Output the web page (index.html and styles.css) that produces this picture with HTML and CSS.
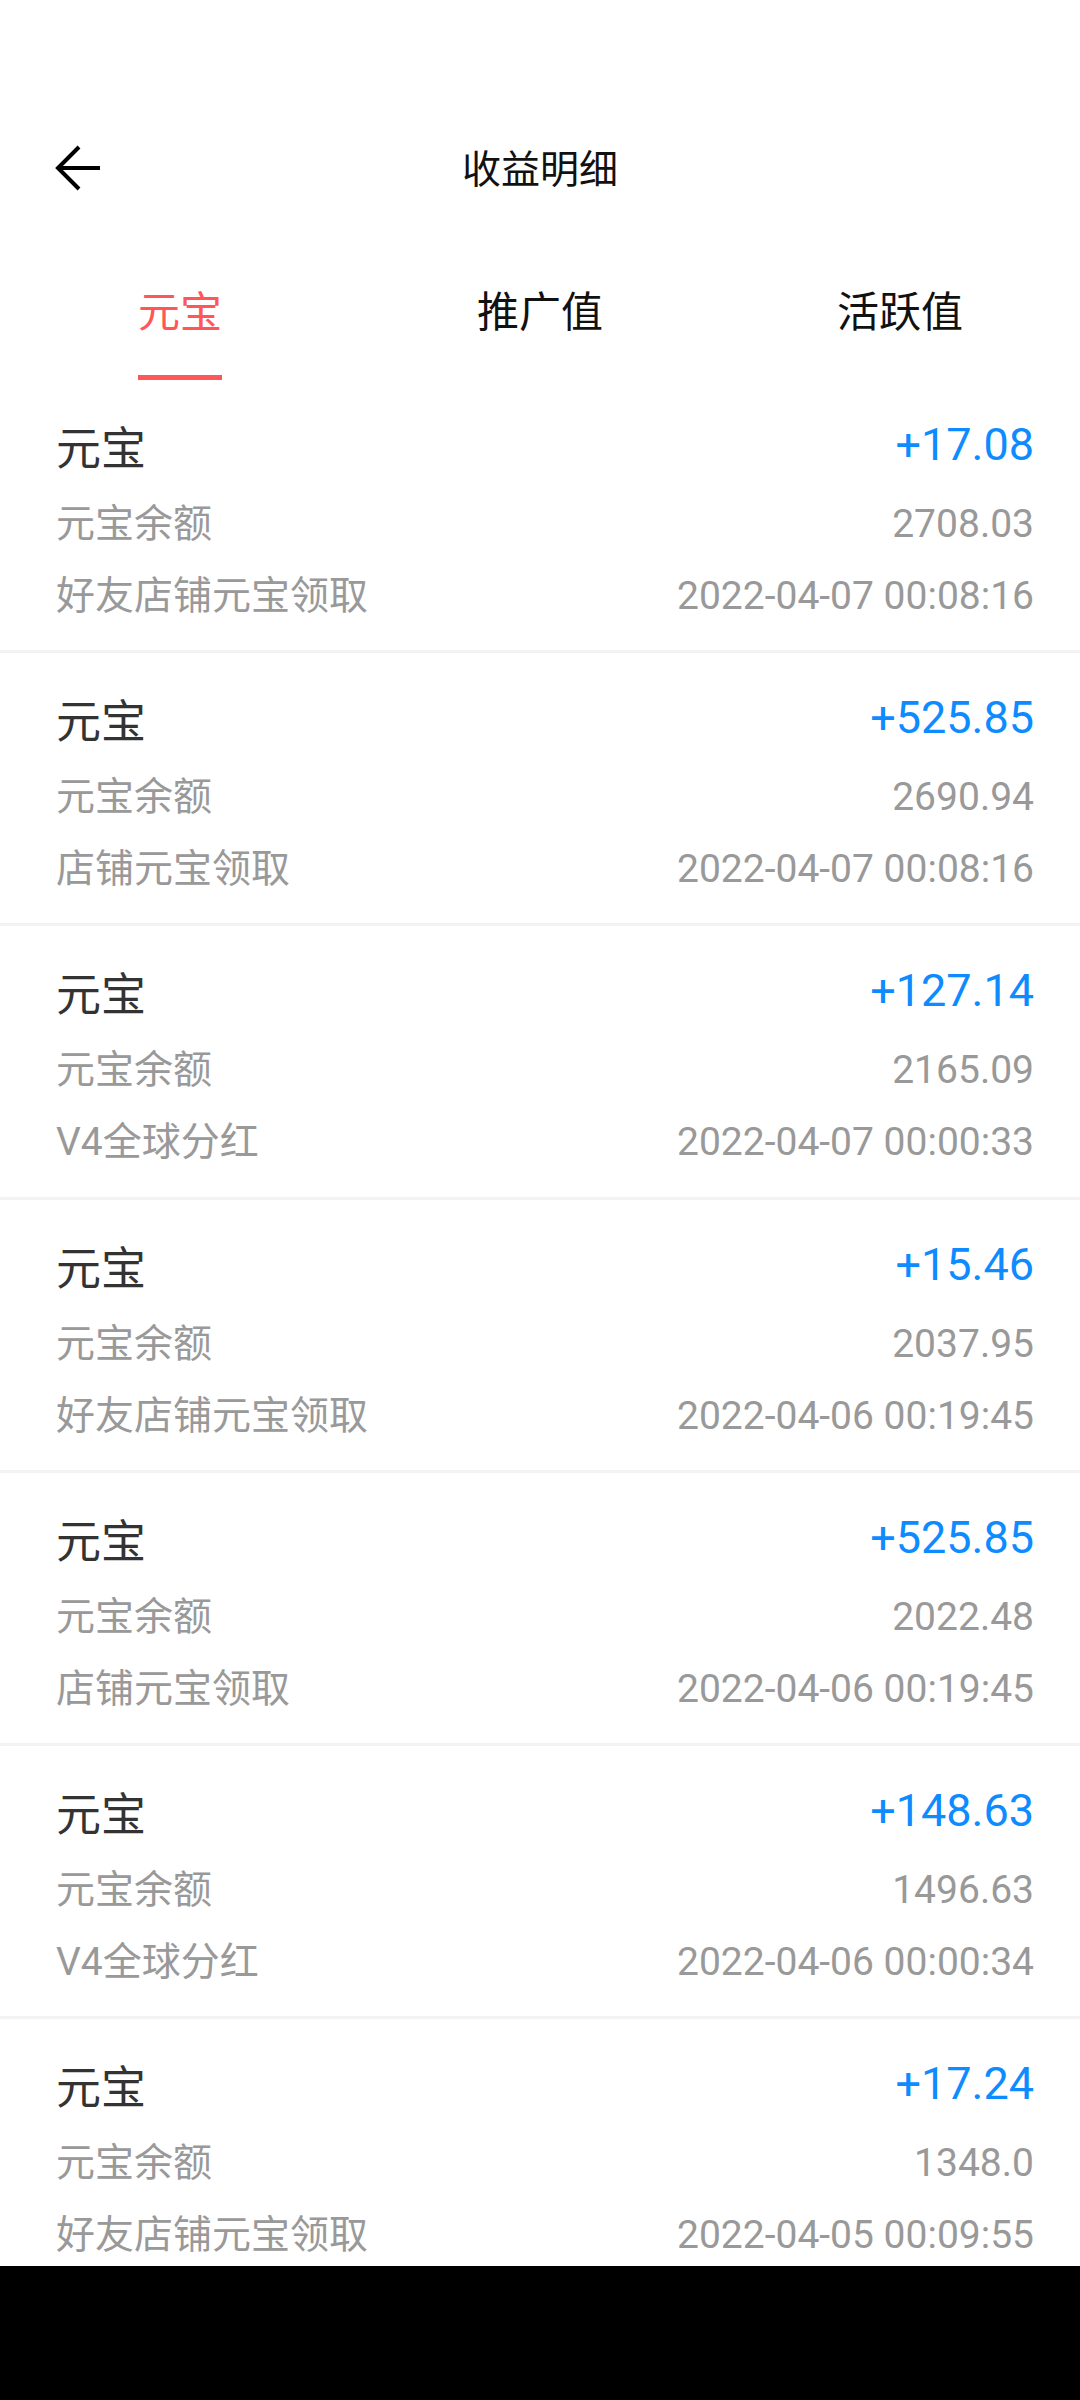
FILE: index.html
```html
<!DOCTYPE html>
<html lang="zh-CN">
<head>
<meta charset="utf-8">
<title>收益明细</title>
<link rel="stylesheet" href="styles.css">
</head>
<body>
<div class="screen">
  <div class="status"></div>
  <header class="header">
    <div class="header-left">
      <svg class="back" width="48" height="46" viewBox="0 0 48 46">
        <path d="M45 23 H4 M24 2 L3 23 L24 44" fill="none" stroke="#000" stroke-width="4"/>
      </svg>
    </div>
    <div class="title">收益明细</div>
    <div class="header-right"></div>
  </header>
  <nav class="tabs">
    <div class="tab active"><span class="tab-text">元宝</span><span class="indicator"></span></div>
    <div class="tab"><span class="tab-text">推广值</span><span class="indicator"></span></div>
    <div class="tab"><span class="tab-text">活跃值</span><span class="indicator"></span></div>
  </nav>
  <main class="list">
    <div class="item">
      <div class="row row-main"><span class="name">元宝</span><span class="amount">+17.08</span></div>
      <div class="row row-sub"><span>元宝余额</span><span>2708.03</span></div>
      <div class="row row-sub row-last"><span>好友店铺元宝领取</span><span>2022-04-07 00:08:16</span></div>
    </div>
    <div class="item">
      <div class="row row-main"><span class="name">元宝</span><span class="amount">+525.85</span></div>
      <div class="row row-sub"><span>元宝余额</span><span>2690.94</span></div>
      <div class="row row-sub row-last"><span>店铺元宝领取</span><span>2022-04-07 00:08:16</span></div>
    </div>
    <div class="item">
      <div class="row row-main"><span class="name">元宝</span><span class="amount">+127.14</span></div>
      <div class="row row-sub"><span>元宝余额</span><span>2165.09</span></div>
      <div class="row row-sub row-last"><span>V4全球分红</span><span>2022-04-07 00:00:33</span></div>
    </div>
    <div class="item">
      <div class="row row-main"><span class="name">元宝</span><span class="amount">+15.46</span></div>
      <div class="row row-sub"><span>元宝余额</span><span>2037.95</span></div>
      <div class="row row-sub row-last"><span>好友店铺元宝领取</span><span>2022-04-06 00:19:45</span></div>
    </div>
    <div class="item">
      <div class="row row-main"><span class="name">元宝</span><span class="amount">+525.85</span></div>
      <div class="row row-sub"><span>元宝余额</span><span>2022.48</span></div>
      <div class="row row-sub row-last"><span>店铺元宝领取</span><span>2022-04-06 00:19:45</span></div>
    </div>
    <div class="item">
      <div class="row row-main"><span class="name">元宝</span><span class="amount">+148.63</span></div>
      <div class="row row-sub"><span>元宝余额</span><span>1496.63</span></div>
      <div class="row row-sub row-last"><span>V4全球分红</span><span>2022-04-06 00:00:34</span></div>
    </div>
    <div class="item">
      <div class="row row-main"><span class="name">元宝</span><span class="amount">+17.24</span></div>
      <div class="row row-sub"><span>元宝余额</span><span>1348.0</span></div>
      <div class="row row-sub row-last"><span>好友店铺元宝领取</span><span>2022-04-05 00:09:55</span></div>
    </div>
  </main>
  <div class="navbar"></div>
</div>
</body>
</html>
```

FILE: styles.css
```css
* {
  box-sizing: border-box;
}

html, body {
  margin: 0;
  padding: 0;
  background: #fff;
}

body {
  font-family: "Roboto", "Noto Sans CJK SC", sans-serif;
}

.screen {
  width: 1080px;
  height: 2400px;
  display: flex;
  flex-direction: column;
  overflow: hidden;
  background: #fff;
}

.status {
  height: 114px;
  flex: none;
}

.header {
  height: 112px;
  flex: none;
  display: grid;
  grid-template-columns: 1fr auto 1fr;
  align-items: center;
}

.header-left {
  padding-left: 55px;
  display: flex;
  align-items: center;
}

.back {
  display: block;
  margin-top: -4px;
}

.title {
  font-size: 39px;
  line-height: 50px;
  color: #111;
}

.tabs {
  height: 154px;
  flex: none;
  display: grid;
  grid-template-columns: 1fr 1fr 1fr;
}

.tab {
  display: flex;
  flex-direction: column;
  align-items: center;
  padding-top: 57px;
}

.tab-text {
  font-size: 42px;
  line-height: 60px;
  color: #111;
}

.indicator {
  width: 84px;
  height: 5px;
  margin-top: 32px;
  background: transparent;
}

.tab.active .tab-text {
  color: #ff5757;
}

.tab.active .indicator {
  background: #ff5757;
}

.list {
  flex: 1;
  overflow: hidden;
}

.item {
  height: 273.2px;
  padding: 40px 46px 0 56px;
  border-bottom: 3px solid #f3f3f3;
}

.row {
  display: flex;
  justify-content: space-between;
  align-items: center;
}

.row-main {
  height: 60px;
}

.name {
  font-size: 45px;
  line-height: 60px;
  color: #333;
}

.amount {
  font-size: 45px;
  line-height: 60px;
  color: #0d8bff;
  margin-bottom: 10px;
}

.row-sub {
  height: 52px;
  margin-top: 18px;
  font-size: 39px;
  line-height: 52px;
  color: #999;
}

.row-last {
  margin-top: 20px;
}

.navbar {
  height: 134px;
  flex: none;
  background: #000;
}
```
